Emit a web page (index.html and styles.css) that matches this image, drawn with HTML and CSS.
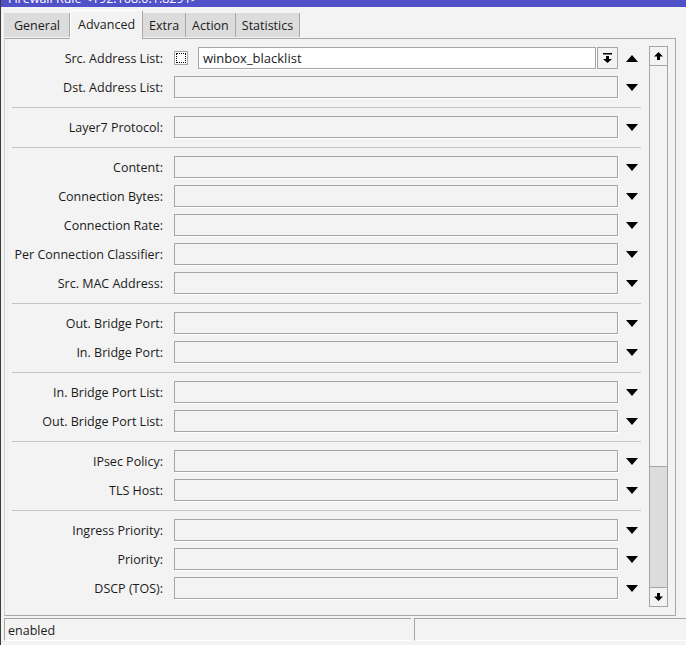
FILE: index.html
```html
<!DOCTYPE html>
<html lang="en">
<head>
    <meta charset="UTF-8">
    <meta name="viewport" content="width=device-width, initial-scale=1.0">
    <title>Firewall Rule</title>
    <link rel="stylesheet" href="styles.css">
</head>
<body>
    <div class="window">
        <div class="titlebar"><span class="title">Firewall Rule &lt;192.168.0.1:8291&gt;</span></div>

        <div class="tabs">
            <div class="tab tab-general">General</div>
            <div class="tab active">Advanced</div>
            <div class="tab">Extra</div>
            <div class="tab">Action</div>
            <div class="tab">Statistics</div>
        </div>

        <div class="panel">
            <div class="form">
                <div class="row">
                    <label>Src. Address List:</label>
                    <div class="field-wrap">
                        <span class="check"><span></span></span>
                        <div class="field white">winbox_blacklist</div>
                        <div class="pick">
                            <svg width="9" height="10" viewBox="0 0 9 10"><rect x="0" y="0" width="9" height="1.5" fill="#000"/><polygon points="3,3 6,3 6,6 9,6 4.5,10 0,6 3,6" fill="#000"/></svg>
                        </div>
                    </div>
                    <span class="arrow"><svg width="12" height="7" viewBox="0 0 12 7"><polygon points="6,0 12,7 0,7" fill="#000"/></svg></span>
                </div>
                <div class="row">
                    <label>Dst. Address List:</label>
                    <div class="field"></div>
                    <span class="arrow down"></span>
                </div>

                <div class="sep"></div>

                <div class="row">
                    <label>Layer7 Protocol:</label>
                    <div class="field"></div>
                    <span class="arrow down"></span>
                </div>

                <div class="sep"></div>

                <div class="row">
                    <label>Content:</label>
                    <div class="field"></div>
                    <span class="arrow down"></span>
                </div>
                <div class="row">
                    <label>Connection Bytes:</label>
                    <div class="field"></div>
                    <span class="arrow down"></span>
                </div>
                <div class="row">
                    <label>Connection Rate:</label>
                    <div class="field"></div>
                    <span class="arrow down"></span>
                </div>
                <div class="row">
                    <label>Per Connection Classifier:</label>
                    <div class="field"></div>
                    <span class="arrow down"></span>
                </div>
                <div class="row">
                    <label>Src. MAC Address:</label>
                    <div class="field"></div>
                    <span class="arrow down"></span>
                </div>

                <div class="sep"></div>

                <div class="row">
                    <label>Out. Bridge Port:</label>
                    <div class="field"></div>
                    <span class="arrow down"></span>
                </div>
                <div class="row">
                    <label>In. Bridge Port:</label>
                    <div class="field"></div>
                    <span class="arrow down"></span>
                </div>

                <div class="sep"></div>

                <div class="row">
                    <label>In. Bridge Port List:</label>
                    <div class="field"></div>
                    <span class="arrow down"></span>
                </div>
                <div class="row">
                    <label>Out. Bridge Port List:</label>
                    <div class="field"></div>
                    <span class="arrow down"></span>
                </div>

                <div class="sep"></div>

                <div class="row">
                    <label>IPsec Policy:</label>
                    <div class="field"></div>
                    <span class="arrow down"></span>
                </div>
                <div class="row">
                    <label>TLS Host:</label>
                    <div class="field"></div>
                    <span class="arrow down"></span>
                </div>

                <div class="sep"></div>

                <div class="row">
                    <label>Ingress Priority:</label>
                    <div class="field"></div>
                    <span class="arrow down"></span>
                </div>
                <div class="row">
                    <label>Priority:</label>
                    <div class="field"></div>
                    <span class="arrow down"></span>
                </div>
                <div class="row">
                    <label>DSCP (TOS):</label>
                    <div class="field"></div>
                    <span class="arrow down"></span>
                </div>
            </div>

            <div class="scrollbar">
                <div class="sb-btn">
                    <svg width="9" height="8" viewBox="0 0 9 8"><polygon points="4.5,0 9,4.5 6,4.5 6,8 3,8 3,4.5 0,4.5" fill="#000"/></svg>
                </div>
                <div class="sb-thumb"></div>
                <div class="sb-track"></div>
                <div class="sb-btn sb-down">
                    <svg width="9" height="8" viewBox="0 0 9 8"><polygon points="3,0 6,0 6,3.5 9,3.5 4.5,8 0,3.5 3,3.5" fill="#000"/></svg>
                </div>
            </div>
        </div>

        <div class="statusbar">
            <div class="status status-main">enabled</div>
            <div class="status status-rest"></div>
        </div>
    </div>

    <script>
        // every closed dropdown gets the same small down triangle
        document.querySelectorAll('.arrow.down').forEach(el => {
            el.innerHTML = '<svg width="12" height="7" viewBox="0 0 12 7"><polygon points="0,0 12,0 6,7" fill="#000"/></svg>';
        });
    </script>
</body>
</html>
```

FILE: styles.css
```css
body { margin: 0; font-family: "Open Sans", "Noto Sans", sans-serif; font-size: 12.5px; color: #1b1b1b; background: #f3f3f3; }
.window { width: 686px; height: 645px; border-left: 1px solid #3a3a3a; box-sizing: border-box; background: #f3f3f3; overflow: hidden; }

.titlebar { height: 7px; background: #5050c9; overflow: hidden; }
.title { display: block; margin-top: -7px; padding-left: 7px; line-height: 12px; color: #fff; }

.tabs { display: flex; height: 31px; padding-left: 3px; align-items: flex-end; }
.tab { height: 24px; line-height: 26px; padding: 0 6px; background: #dcdcdc; border-right: 1px solid #a8a8a8; margin-bottom: 1px; }
.tab-general { padding: 0 9px 0 10px; }
.tab.active { height: 28px; line-height: 28px; background: #f3f3f3; border-top: 1px solid #fff; border-left: 1px solid #fff; padding: 0 7px; margin-bottom: -1px; position: relative; z-index: 1; }

.panel { display: flex; height: 578px; margin: 0 10px 0 3px; border: 1px solid #a8a8a8; border-left-color: #d0d0d0; box-sizing: border-box; }
.form { flex: 1; min-width: 0; padding-top: 8px; }

.row { display: flex; align-items: center; height: 22px; margin-bottom: 7px; }
.row label { width: 158px; flex-shrink: 0; margin-right: 11px; text-align: right; white-space: nowrap; }
.row > .field, .field-wrap { width: 444px; flex-shrink: 0; }
.field { height: 22px; box-sizing: border-box; border: 1px solid #a5a5a5; box-shadow: 1px 1px 0 #fff; line-height: 20px; padding-left: 4px; }
.field.white { background: #fff; flex: 1; font-size: 13px; }
.field-wrap { display: flex; align-items: center; }
.check { width: 14px; height: 14px; box-sizing: border-box; border: 1px solid #a5a5a5; background: #fff; margin-right: 10px; display: flex; align-items: center; justify-content: center; }
.check span { width: 8px; height: 8px; border: 1px dotted #000; }
.pick { width: 21px; height: 22px; box-sizing: border-box; border: 1px solid #a5a5a5; margin-left: 1px; display: flex; align-items: center; justify-content: center; }
.arrow { margin-left: 8px; }
.arrow svg { display: block; }

.sep { height: 1px; background: #c4c4c4; margin: 9px 5px 8px 7px; }

.scrollbar { flex-shrink: 0; width: 19px; height: 561px; margin: 7px 7px 0 3px; border: 1px solid #a5a5a5; box-sizing: border-box; display: flex; flex-direction: column; }
.sb-btn { height: 18px; border-bottom: 1px solid #a5a5a5; display: flex; align-items: center; justify-content: center; background: #f3f3f3; }
.sb-down { border-bottom: none; border-top: 1px solid #a5a5a5; }
.sb-thumb { height: 400px; border-bottom: 1px solid #a5a5a5; background: #f3f3f3; }
.sb-track { flex: 1; background: #dcdcdc; }

.statusbar { display: flex; gap: 3px; padding: 2px 0 0 3px; }
.status { height: 23px; box-sizing: border-box; border-top: 1px solid #a5a5a5; border-left: 1px solid #a5a5a5; border-bottom: 1px solid #fff; line-height: 23px; padding-left: 3px; }
.status-main { width: 407px; }
.status-rest { flex: 1; }
```
